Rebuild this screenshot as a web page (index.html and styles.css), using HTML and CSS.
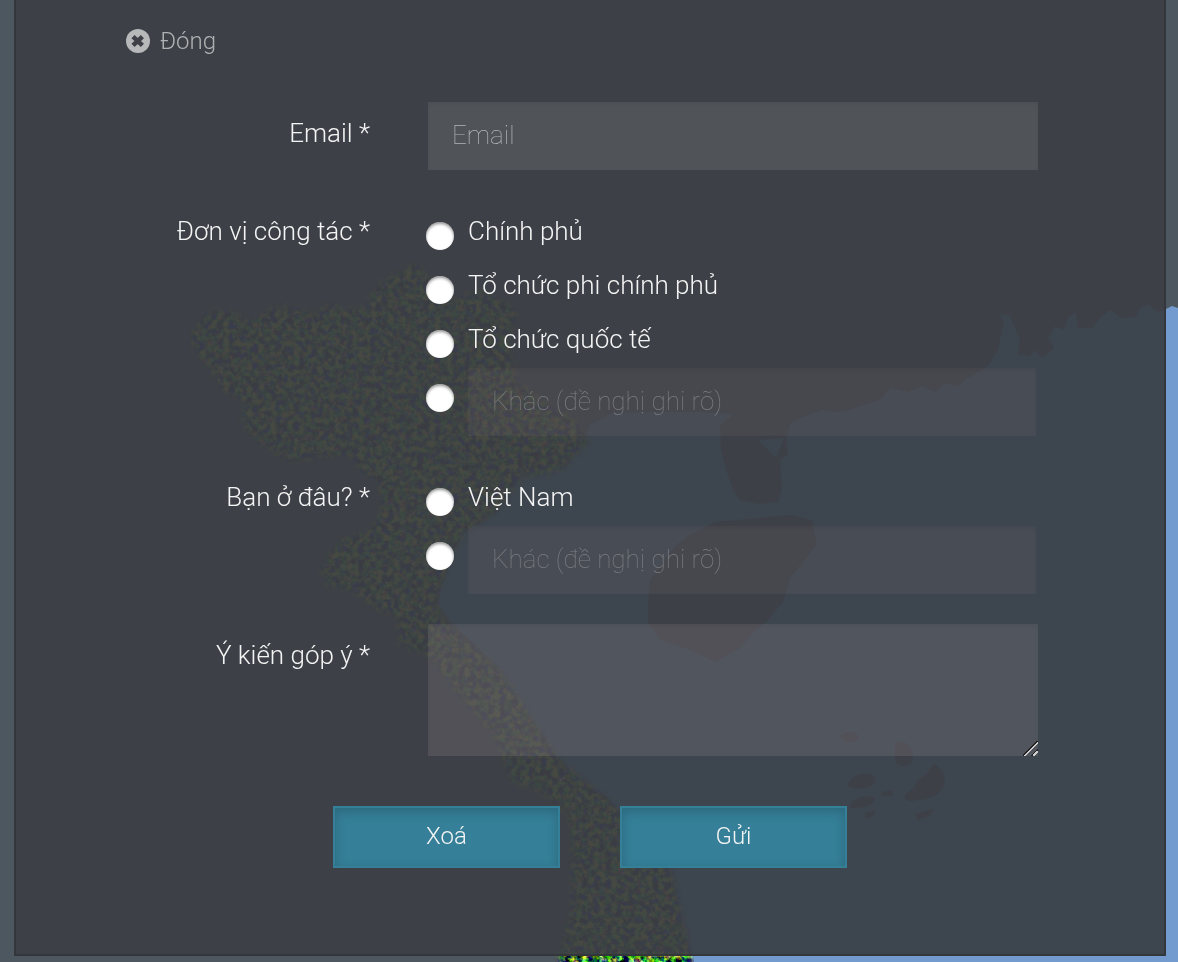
FILE: index.html
```html
<!DOCTYPE html>
<html lang="vi">
<head>
<meta charset="utf-8">
<meta name="viewport" content="width=device-width, initial-scale=1">
<title>Ý kiến góp ý</title>
<link rel="stylesheet" href="styles.css">
</head>
<body>
<div class="stage">
  <svg class="map" viewBox="0 0 1178 962" preserveAspectRatio="xMidYMid slice" aria-hidden="true">
    <defs>
      <filter id="terrain" x="0" y="0" width="1" height="1" color-interpolation-filters="sRGB">
        <feGaussianBlur in="SourceGraphic" stdDeviation="3" result="shape"/>
        <feTurbulence type="fractalNoise" baseFrequency="0.17" numOctaves="4" seed="7"/>
        <feColorMatrix values="2.4 0.8 0 0 -1.35  2 2.2 0 0 -1.6  0 0 1.2 0 -0.4  0 0 0 0 1"/>
        <feComposite in2="shape" operator="in"/>
      </filter>
    </defs>
    <rect class="land" width="1178" height="962"/>
    <path class="sea" d="M1178 308L1172 306L1166 309L1158 312L1148 304L1140 308L1136 317L1122 318L1110 310L1100 318L1092 328L1078 328L1076 312L1068 318L1064 330L1055 326L1048 338L1054 348L1042 358L1034 350L1030 356L1018 354L1020 340L1010 316L1000 314L1004 322L998 350L988 366L965 380L958 386L945 383L935 392L922 386L908 392L890 388L880 400L866 404L850 410L835 412L822 410L800 418L790 424L786 440L788 455L780 460L782 490L778 502L760 504L740 500L734 492L726 470L721 450L720 425L734 414L700 412L650 412L612 413L590 425L578 445L568 466L548 462L528 466L512 484L500 508L482 522L466 530L456 546L448 570L440 590L438 606L452 624L472 642L498 668L508 690L535 724L555 754L580 780L606 796L620 812L640 834L666 862L674 890L682 920L692 962H1178Z"/>
    <path class="land" d="M648 604L650 580L676 545L690 535L715 522L790 515L812 520L817 545L806 558L790 578L783 602L768 620L752 634L740 648L715 662L690 650L660 640L648 622ZM755 445L780 455L775 475L757 470Z"/>
    <path class="sea" d="M758 440L784 438L776 458Z"/>
    <path class="land" d="M848 786C850 774 868 770 875 777C878 786 862 792 848 786ZM850 806C855 796 868 795 875 798C876 806 860 808 850 808ZM895 744C902 738 913 744 913 758C911 768 897 769 895 760ZM914 788C918 776 928 777 933 764C940 766 945 774 945 784C938 800 925 798 913 801C902 801 902 795 914 788ZM915 814L934 809L930 816L918 820ZM840 736C844 730 857 731 859 738C855 745 842 743 840 736ZM881 792L892 790L893 796L882 796ZM865 813L875 811L873 817L866 818Z"/>
    <path class="vietnam" filter="url(#terrain)" d="M415 262L390 277L372 290L370 306L350 310L330 304L310 315L296 308L275 305L260 318L245 320L225 308L205 316L190 334L196 352L212 372L224 392L246 400L242 425L258 442L290 462L320 456L350 455L364 472L378 482L382 508L374 528L340 540L320 570L328 586L356 592L374 608L400 618L398 644L430 657L462 698L492 732L503 758L512 782L542 792L568 814L572 846L572 900L558 972H694L682 920L670 866L620 812L598 792L560 762L500 670L444 622L434 600L456 546L466 530L500 508L520 478L560 470L588 442L575 420L540 400L515 376L508 342L516 310L480 290L450 300Z"/>
  </svg>

  <main class="panel">
    <button class="close" type="button">
      <svg class="close-icon" viewBox="0 0 24 24" aria-hidden="true">
        <circle cx="12" cy="12" r="12"/>
        <path d="M7 7.600L16.400 16.400M16.400 7.600L7 16.400"/>
      </svg>
      <span>Đóng</span>
    </button>

    <form class="form">
      <div class="row">
        <label class="caption" for="email">Email *</label>
        <input class="field" id="email" type="email" placeholder="Email">
      </div>

      <div class="row" role="radiogroup" aria-labelledby="org-caption">
        <span class="caption" id="org-caption">Đơn vị công tác *</span>
        <div class="options">
          <div class="option">
            <input class="radio" type="radio" name="org" id="org-gov">
            <label class="option-text" for="org-gov">Chính phủ</label>
          </div>
          <div class="option">
            <input class="radio" type="radio" name="org" id="org-ngo">
            <label class="option-text" for="org-ngo">Tổ chức phi chính phủ</label>
          </div>
          <div class="option">
            <input class="radio" type="radio" name="org" id="org-int">
            <label class="option-text" for="org-int">Tổ chức quốc tế</label>
          </div>
          <div class="option">
            <input class="radio" type="radio" name="org" aria-label="Khác">
            <input class="field field-other" type="text" placeholder="Khác (đề nghị ghi rõ)" aria-label="Khác (đề nghị ghi rõ)" disabled>
          </div>
        </div>
      </div>

      <div class="row" role="radiogroup" aria-labelledby="place-caption">
        <span class="caption" id="place-caption">Bạn ở đâu? *</span>
        <div class="options">
          <div class="option">
            <input class="radio" type="radio" name="place" id="place-vn">
            <label class="option-text" for="place-vn">Việt Nam</label>
          </div>
          <div class="option">
            <input class="radio" type="radio" name="place" aria-label="Khác">
            <input class="field field-other" type="text" placeholder="Khác (đề nghị ghi rõ)" aria-label="Khác (đề nghị ghi rõ)" disabled>
          </div>
        </div>
      </div>

      <div class="row">
        <label class="caption" for="comment">Ý kiến góp ý *</label>
        <textarea class="field field-comment" id="comment"></textarea>
      </div>
    </form>

    <div class="actions">
      <button class="button" type="button">Xoá</button>
      <button class="button" type="button">Gửi</button>
    </div>
  </main>
</div>
</body>
</html>
```

FILE: styles.css
```css
* {
  box-sizing: border-box;
}

body {
  margin: 0;
  background: #4c575f;
  color: #f4f4f4;
  font-family: Roboto, "Liberation Sans", sans-serif;
  font-size: 26px;
  font-weight: 300;
}

.stage {
  display: grid;
  min-height: 100vh;
}

/* The map and the panel share one grid cell, the panel on top. */
.map,
.panel {
  grid-area: 1 / 1;
}

.map {
  width: 100%;
  height: 100%;
  min-height: 0;
}

.land {
  fill: #4c575f;
}

.sea {
  fill: #739bcf;
}

.vietnam {
  fill: #000;
}

.panel {
  align-self: start;
  margin: 0 12px 6px 14px;
  padding: 24px 126px 86px 110px;
  border: 2px solid #33363b;
  border-top: 0;
  background: rgba(61, 63, 70, 0.95);
  background-clip: padding-box;
  backdrop-filter: saturate(1.7) hue-rotate(-16deg);
}

button,
input,
textarea {
  font: inherit;
  color: inherit;
}

.close {
  display: flex;
  align-items: center;
  gap: 10px;
  height: 34px;
  margin-bottom: 44px;
  padding: 0;
  border: 0;
  background: none;
  color: #b0b1b3;
  font-size: 24px;
}

.close-icon {
  width: 24px;
  height: 24px;
  fill: #b7b8ba;
}

.close-icon path {
  stroke: #3e4047;
  stroke-width: 4.6;
}

.form {
  display: grid;
  gap: 30px;
}

.row {
  display: grid;
  grid-template-columns: 244fr 610fr;
  column-gap: 58px;
  align-items: start;
}

.caption,
.option-text {
  padding-top: 8px;
  line-height: 46px;
}

.caption {
  text-align: right;
}

.field {
  display: block;
  width: 100%;
  min-width: 0;
  height: 68px;
  margin: 0;
  padding: 0 24px 2px;
  border: 0;
  border-radius: 0;
  outline: 0;
  background: rgba(245, 255, 240, 0.1);
  box-shadow: inset 0 2px 4px rgba(0, 0, 0, 0.06);
}

.field::placeholder {
  color: #b4b6b7;
  font-weight: 100;
  opacity: 1;
}

.field-other {
  flex: 1;
  margin: 6px 2px 0 0;
  background: rgba(255, 220, 225, 0.05);
}

.field-other::placeholder {
  color: #7c7e80;
}

.field-comment {
  height: 132px;
  padding: 16px 24px;
  background: rgba(255, 235, 235, 0.1);
  resize: both;
}

.field-comment::-webkit-resizer {
  background: linear-gradient(135deg, transparent 46%, #222 46% 52%, #ccc 52% 59%, transparent 59% 74%, #222 74% 80%, #ccc 80% 87%, transparent 87%);
}

.option {
  display: flex;
  align-items: flex-start;
  gap: 14px;
}

.radio {
  appearance: none;
  flex: none;
  width: 28px;
  height: 28px;
  margin: 22px 0 0 -2px;
  border-radius: 50%;
  background: #fff;
  box-shadow: inset 0 2px 3px rgba(0, 0, 0, 0.4);
}

.radio:checked {
  border: 8px solid #fff;
  background: #357f98;
}

.actions {
  display: flex;
  justify-content: center;
  gap: 60px;
  /* Cancels the uneven side padding so the pair sits on the panel's centre. */
  margin: 50px -16px 0 0;
}

.button {
  width: 227px;
  height: 62px;
  padding: 0 0 2px;
  border: 2px solid #357f98;
  border-radius: 0;
  background: #357f98;
  box-shadow: inset 0 4px 12px rgba(0, 0, 0, 0.18);
  font-size: 24px;
}
```
